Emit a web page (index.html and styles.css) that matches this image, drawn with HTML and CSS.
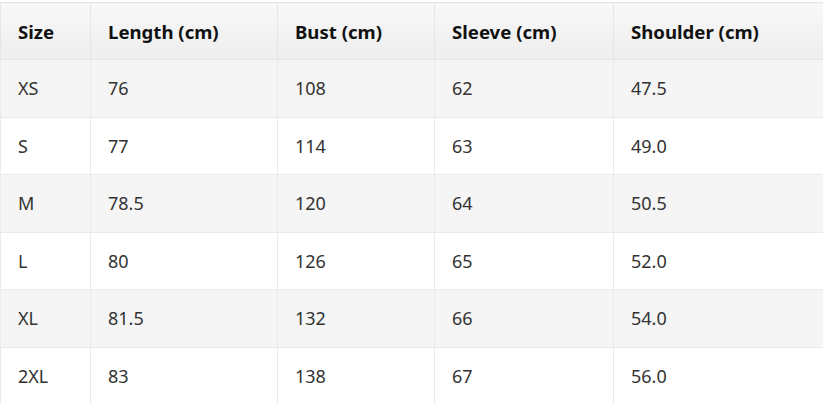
FILE: index.html
```html
<!DOCTYPE html>
<html>
<head>
<meta charset="utf-8">
<link rel="stylesheet" href="styles.css">
</head>
<body>
<table class="size-table">
  <colgroup>
    <col class="c1"><col class="c2"><col class="c3"><col class="c4"><col class="c5">
  </colgroup>
  <thead>
    <tr><th>Size</th><th>Length (cm)</th><th>Bust (cm)</th><th>Sleeve (cm)</th><th>Shoulder (cm)</th></tr>
  </thead>
  <tbody>
    <tr><td>XS</td><td>76</td><td>108</td><td>62</td><td>47.5</td></tr>
    <tr><td>S</td><td>77</td><td>114</td><td>63</td><td>49.0</td></tr>
    <tr><td>M</td><td>78.5</td><td>120</td><td>64</td><td>50.5</td></tr>
    <tr><td>L</td><td>80</td><td>126</td><td>65</td><td>52.0</td></tr>
    <tr><td>XL</td><td>81.5</td><td>132</td><td>66</td><td>54.0</td></tr>
    <tr><td>2XL</td><td>83</td><td>138</td><td>67</td><td>56.0</td></tr>
  </tbody>
</table>
</body>
</html>
```
FILE: styles.css
```css
html, body {
  margin: 0;
  padding: 0;
  background: #fff;
}
body {
  padding-top: 2px;
  overflow: hidden;
}
.size-table {
  border-collapse: collapse;
  table-layout: fixed;
  width: 843px;
  font-family: "Noto Sans", "Open Sans", sans-serif;
  font-size: 18px;
  color: #333;
}
.c1 { width: 90px; }
.c2 { width: 187px; }
.c3 { width: 157px; }
.c4 { width: 179px; }
.c5 { width: 230px; }
.size-table th,
.size-table td {
  border: 1px solid #ebebeb;
  text-align: left;
  padding: 0 17px;
}
.size-table th {
  height: 56px;
  font-size: 18.6px;
  font-weight: 700;
  color: #111;
  background: linear-gradient(#f8f8f8, #eeeeee);
  border-color: #e6e6e6;
}
.size-table td {
  height: 56.5px;
}
.size-table tbody tr:nth-child(odd) td {
  background: #f5f5f5;
}
```
